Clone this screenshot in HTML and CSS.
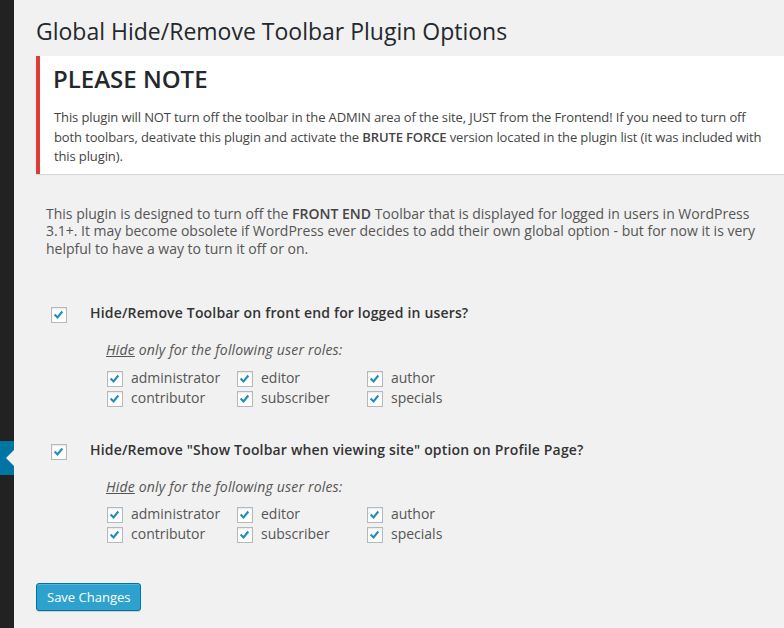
FILE: index.html
```html
<!DOCTYPE html>
<html lang="en">
<head>
<meta charset="utf-8">
<title>Global Hide/Remove Toolbar Plugin Options</title>
<link rel="stylesheet" href="styles.css">
</head>
<body>
<div class="layout">
  <aside class="sidebar">
    <div class="menu-current"><span class="menu-arrow"></span></div>
  </aside>
  <main class="wrap">
    <h1 class="page-title">Global Hide/Remove Toolbar Plugin Options</h1>
    <div class="notice">
      <h2 class="notice-title">PLEASE NOTE</h2>
      <p class="notice-text">This plugin will NOT turn off the toolbar in the ADMIN area of the site, JUST from the Frontend! If you need to turn off both toolbars, deativate this plugin and activate the <strong>BRUTE FORCE</strong> version located in the plugin list (it was included with this plugin).</p>
    </div>
    <p class="intro">This plugin is designed to turn off the <strong>FRONT END</strong> Toolbar that is displayed for logged in users in WordPress 3.1+. It may become obsolete if WordPress ever decides to add their own global option - but for now it is very helpful to have a way to turn it off or on.</p>

    <form class="options">
      <div class="option first">
        <span class="cb"><svg viewBox="0 0 16 16"><polyline points="4,8.5 7.3,11.8 12.8,5"/></svg></span>
        <span class="option-label">Hide/Remove Toolbar on front end for logged in users?</span>
      </div>
      <div class="roles">
        <p class="roles-title"><u>Hide</u> only for the following user roles:</p>
        <div class="roles-grid">
          <label class="role"><span class="cb"><svg viewBox="0 0 16 16"><polyline points="4,8.5 7.3,11.8 12.8,5"/></svg></span>administrator</label>
          <label class="role"><span class="cb"><svg viewBox="0 0 16 16"><polyline points="4,8.5 7.3,11.8 12.8,5"/></svg></span>editor</label>
          <label class="role"><span class="cb"><svg viewBox="0 0 16 16"><polyline points="4,8.5 7.3,11.8 12.8,5"/></svg></span>author</label>
          <label class="role"><span class="cb"><svg viewBox="0 0 16 16"><polyline points="4,8.5 7.3,11.8 12.8,5"/></svg></span>contributor</label>
          <label class="role"><span class="cb"><svg viewBox="0 0 16 16"><polyline points="4,8.5 7.3,11.8 12.8,5"/></svg></span>subscriber</label>
          <label class="role"><span class="cb"><svg viewBox="0 0 16 16"><polyline points="4,8.5 7.3,11.8 12.8,5"/></svg></span>specials</label>
        </div>
      </div>

      <div class="option second">
        <span class="cb"><svg viewBox="0 0 16 16"><polyline points="4,8.5 7.3,11.8 12.8,5"/></svg></span>
        <span class="option-label">Hide/Remove "Show Toolbar when viewing site" option on Profile Page?</span>
      </div>
      <div class="roles">
        <p class="roles-title"><u>Hide</u> only for the following user roles:</p>
        <div class="roles-grid">
          <label class="role"><span class="cb"><svg viewBox="0 0 16 16"><polyline points="4,8.5 7.3,11.8 12.8,5"/></svg></span>administrator</label>
          <label class="role"><span class="cb"><svg viewBox="0 0 16 16"><polyline points="4,8.5 7.3,11.8 12.8,5"/></svg></span>editor</label>
          <label class="role"><span class="cb"><svg viewBox="0 0 16 16"><polyline points="4,8.5 7.3,11.8 12.8,5"/></svg></span>author</label>
          <label class="role"><span class="cb"><svg viewBox="0 0 16 16"><polyline points="4,8.5 7.3,11.8 12.8,5"/></svg></span>contributor</label>
          <label class="role"><span class="cb"><svg viewBox="0 0 16 16"><polyline points="4,8.5 7.3,11.8 12.8,5"/></svg></span>subscriber</label>
          <label class="role"><span class="cb"><svg viewBox="0 0 16 16"><polyline points="4,8.5 7.3,11.8 12.8,5"/></svg></span>specials</label>
        </div>
      </div>

      <div class="submit">
        <button type="button" class="button-primary">Save Changes</button>
      </div>
    </form>
  </main>
</div>
</body>
</html>
```

FILE: styles.css
```css
* { box-sizing: border-box; }

html, body {
  margin: 0;
  padding: 0;
  height: 100%;
  background: #f1f1f1;
  font-family: "Open Sans", "Noto Sans", sans-serif;
  color: #444;
  overflow: hidden;
}

.layout {
  display: flex;
  min-height: 628px;
}

.sidebar {
  width: 14px;
  flex: 0 0 14px;
  background: #222;
  padding-top: 441px;
}

.menu-current {
  height: 34px;
  background: #0074a2;
  display: flex;
  align-items: center;
  justify-content: flex-end;
}

.menu-arrow {
  width: 0;
  height: 0;
  border-top: 8px solid transparent;
  border-bottom: 8px solid transparent;
  border-right: 8px solid #f1f1f1;
}

.wrap {
  flex: 1;
  padding: 0 0 0 22px;
  min-width: 0;
}

.page-title {
  margin: 17px 0 0;
  font-size: 23px;
  line-height: 29px;
  font-weight: 400;
  color: #23282d;
}

.notice {
  margin-top: 10px;
  background: #fff;
  border-left: 4px solid #dd3d36;
  box-shadow: 0 1px 1px 0 rgba(0, 0, 0, 0.1);
  padding: 7px 12px 7px 13px;
}

.notice-title {
  margin: 0;
  font-size: 24px;
  line-height: 32px;
  font-weight: 600;
  color: #23282d;
}

.notice-text {
  margin: 13px 0 0 1px;
  font-size: 13px;
  line-height: 19.5px;
  letter-spacing: -0.12px;
  color: #444;
}

.notice-text strong { font-weight: 600; }

.intro {
  margin: 31px 0 0 10px;
  font-size: 14px;
  line-height: 17.5px;
  color: #555;
}

.intro strong { font-weight: 600; color: #444; }

.options {
  margin: 0;
}

.option {
  display: flex;
  align-items: flex-start;
  gap: 23px;
  padding-left: 15px;
}

.option.first { margin-top: 48px; }
.option.second { margin-top: 34px; }

.option .cb { margin-top: 2px; }

.option-label {
  font-size: 14px;
  line-height: 16px;
  font-weight: 600;
  letter-spacing: 0.17px;
  color: #333;
}

.cb {
  flex: 0 0 16px;
  width: 16px;
  height: 16px;
  border: 1px solid #b4b9be;
  background: #fff;
  box-shadow: inset 0 1px 2px rgba(0, 0, 0, 0.1);
  display: inline-flex;
}

.cb svg {
  width: 14px;
  height: 14px;
}

.cb svg polyline {
  fill: none;
  stroke: #1e8cbe;
  stroke-width: 2.4;
  stroke-linecap: butt;
  stroke-linejoin: miter;
  transform: translate(-1px, -1px);
}

.roles {
  padding-left: 70px;
  margin-top: 18px;
}

.roles-title {
  margin: 0;
  font-size: 14px;
  line-height: 17.5px;
  font-style: italic;
  letter-spacing: 0.18px;
  color: #555;
}

.roles-title u { text-decoration: underline; }

.roles-grid {
  margin-top: 9px;
  padding-left: 1px;
  display: grid;
  grid-template-columns: repeat(3, 130px);
}

.role {
  display: flex;
  align-items: flex-start;
  gap: 8px;
  font-size: 14px;
  line-height: 20px;
  color: #555;
}

.role .cb { margin-top: 3px; }

.submit {
  margin-top: 39px;
}

.button-primary {
  height: 28px;
  padding: 0 10px 1px;
  font-family: "Open Sans", "Noto Sans", sans-serif;
  font-size: 13px;
  line-height: 26px;
  color: #fff;
  background: #2ea2cc;
  border: 1px solid #0074a2;
  border-radius: 3px;
  box-shadow: inset 0 1px 0 rgba(120, 200, 230, 0.5), 0 1px 0 rgba(0, 0, 0, 0.15);
  cursor: pointer;
}
```
